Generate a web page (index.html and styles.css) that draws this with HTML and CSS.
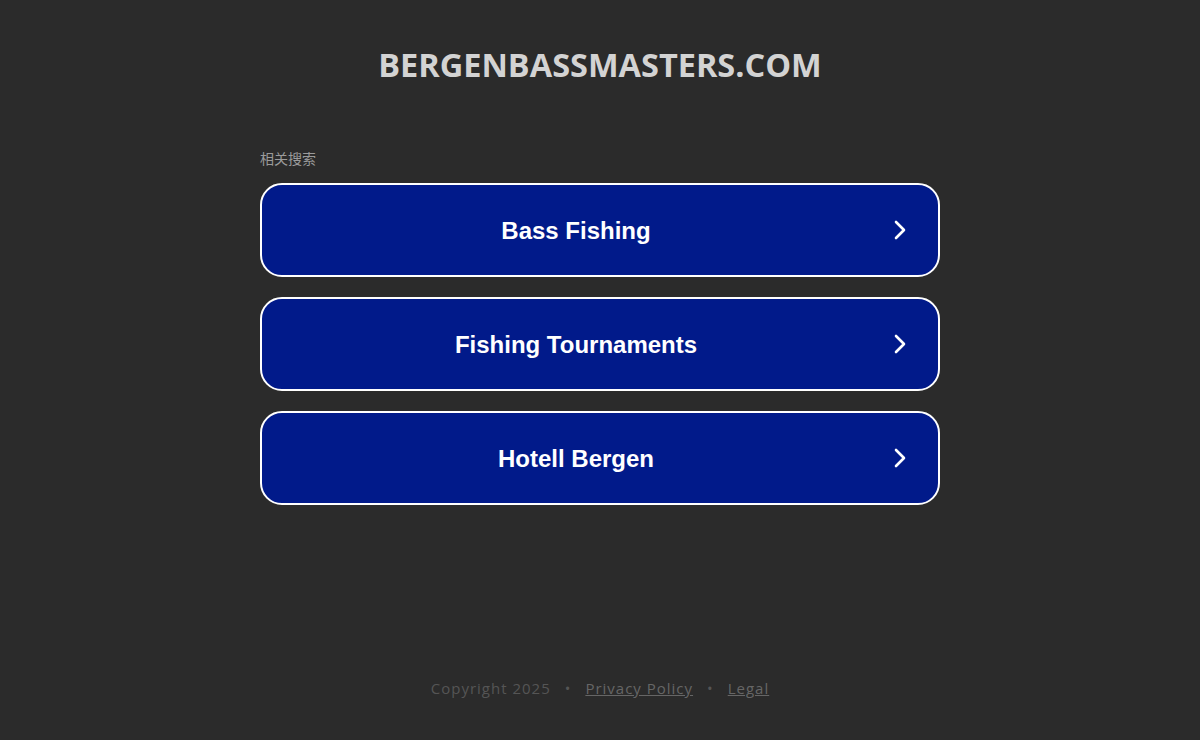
FILE: index.html
```html
<!DOCTYPE html>
<html lang="en">
<head>
<meta charset="utf-8">
<title>bergenbassmasters.com</title>
<link rel="stylesheet" href="styles.css">
</head>
<body>
<div class="page">
  <header class="header">
    <h1 class="domain">BERGENBASSMASTERS.COM</h1>
  </header>
  <main class="main">
    <div class="related">相关搜索</div>
    <ul class="links">
      <li><a class="link" href="#"><span class="label">Bass Fishing</span><svg class="chev" viewBox="0 0 14 22" width="14" height="22"><path d="M3 3 L11 11 L3 19" fill="none" stroke="#fff" stroke-width="2.6" stroke-linecap="round" stroke-linejoin="round"/></svg></a></li>
      <li><a class="link" href="#"><span class="label">Fishing Tournaments</span><svg class="chev" viewBox="0 0 14 22" width="14" height="22"><path d="M3 3 L11 11 L3 19" fill="none" stroke="#fff" stroke-width="2.6" stroke-linecap="round" stroke-linejoin="round"/></svg></a></li>
      <li><a class="link" href="#"><span class="label">Hotell Bergen</span><svg class="chev" viewBox="0 0 14 22" width="14" height="22"><path d="M3 3 L11 11 L3 19" fill="none" stroke="#fff" stroke-width="2.6" stroke-linecap="round" stroke-linejoin="round"/></svg></a></li>
    </ul>
  </main>
  <footer class="footer">
    <span>Copyright 2025</span>
    <span class="dot">•</span>
    <a href="#" class="flink">Privacy Policy</a>
    <span class="dot">•</span>
    <a href="#" class="flink">Legal</a>
  </footer>
</div>
</body>
</html>
```

FILE: styles.css
```css
html, body {
  margin: 0;
  padding: 0;
  background: #2b2b2b;
  height: 100%;
}
body {
  font-family: "Open Sans", "Noto Sans", sans-serif;
}
.page {
  height: 740px;
  display: flex;
  flex-direction: column;
  align-items: center;
}
.header {
  padding-top: 44px;
}
.domain {
  margin: 0;
  font-family: "Open Sans", sans-serif;
  font-weight: 700;
  font-size: 32.5px;
  line-height: 42px;
  color: #d3d3d3;
  letter-spacing: 0;
}
.main {
  width: 680px;
  margin-top: 63px;
}
.related {
  font-family: "Noto Sans CJK SC", sans-serif;
  font-size: 14px;
  line-height: 18px;
  color: #9b9b9b;
  margin-bottom: 16px;
}
.links {
  list-style: none;
  margin: 0;
  padding: 0;
  display: flex;
  flex-direction: column;
  gap: 20px;
}
.link {
  box-sizing: border-box;
  height: 94px;
  display: flex;
  align-items: center;
  justify-content: center;
  position: relative;
  background: #011a8a;
  border: 2px solid #ffffff;
  border-radius: 22px;
  text-decoration: none;
  padding-right: 48px;
  padding-top: 2px;
}
.label {
  font-family: "Liberation Sans", Arial, sans-serif;
  font-weight: 700;
  font-size: 24px;
  color: #ffffff;
}
.chev {
  position: absolute;
  right: 31px;
  top: 50%;
  margin-top: -11px;
}
.footer {
  margin-top: auto;
  margin-bottom: 42px;
  font-family: "Open Sans", sans-serif;
  font-size: 15px;
  letter-spacing: 1px;
  color: #555555;
  display: flex;
  gap: 14px;
  align-items: center;
}
.flink {
  color: #666666;
  text-decoration: underline;
}
.dot {
  color: #555555;
}
```
